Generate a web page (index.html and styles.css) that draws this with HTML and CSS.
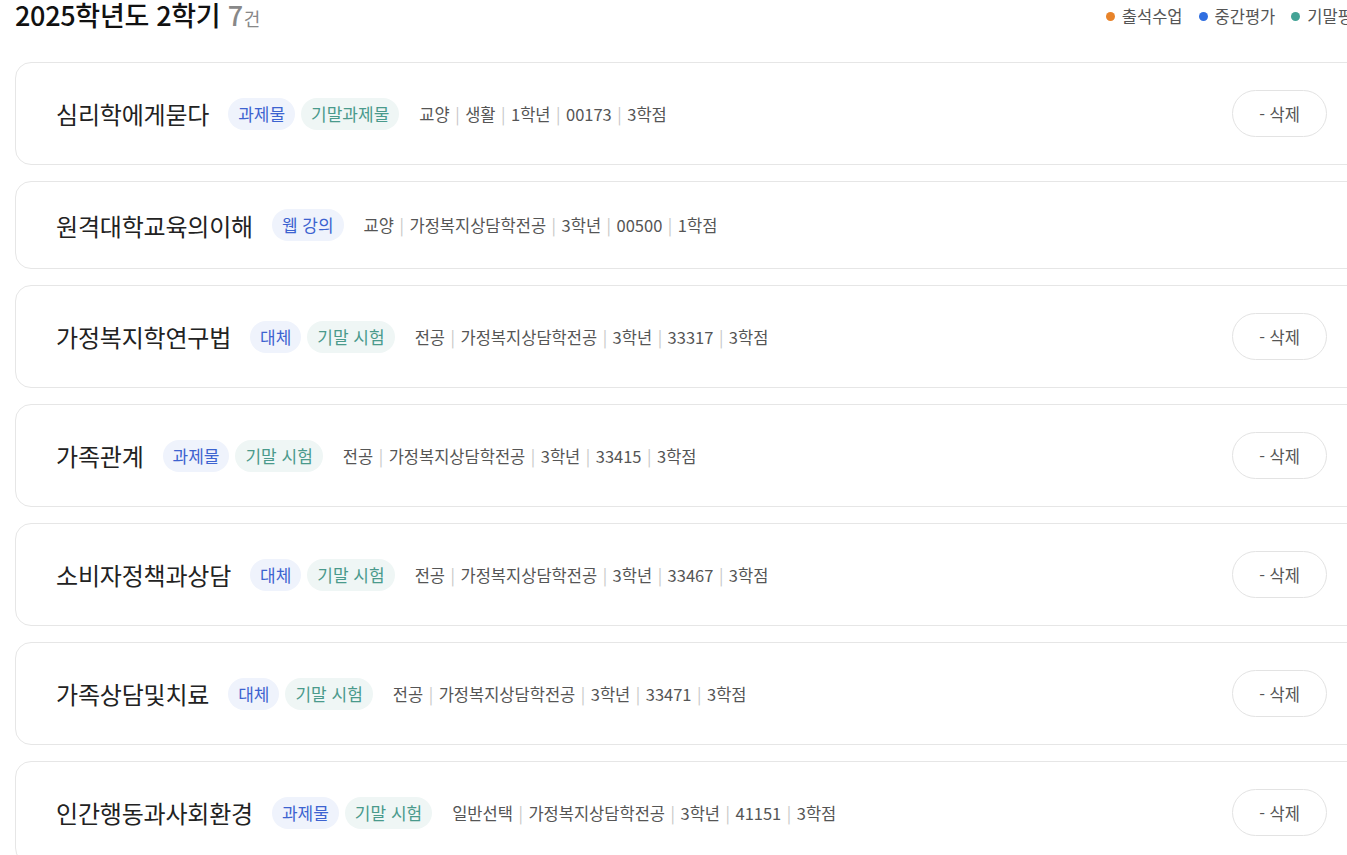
FILE: index.html
```html
<!DOCTYPE html>
<html lang="ko">
<head>
<meta charset="UTF-8" />
<title>수강 과목</title>
<link rel="stylesheet" href="styles.css">
</head>
<body>

<div class="page">
  <div class="header">
    <h2 class="term">2025학년도 2학기 <span class="count">7<small>건</small></span></h2>
    <div class="legend">
      <span class="legend-item"><i class="dot orange"></i>출석수업</span>
      <span class="legend-item"><i class="dot blue"></i>중간평가</span>
      <span class="legend-item"><i class="dot teal"></i>기말평가</span>
    </div>
  </div>

  <div class="list">
    <div class="card">
      <div class="info">
        <span class="name">심리학에게묻다</span>
        <span class="tag blue">과제물</span>
        <span class="tag teal">기말과제물</span>
        <span class="meta">교양<b>|</b>생활<b>|</b>1학년<b>|</b>00173<b>|</b>3학점</span>
      </div>
      <button class="del">- 삭제</button>
    </div>

    <div class="card">
      <div class="info">
        <span class="name">원격대학교육의이해</span>
        <span class="tag blue">웹 강의</span>
        <span class="meta">교양<b>|</b>가정복지상담학전공<b>|</b>3학년<b>|</b>00500<b>|</b>1학점</span>
      </div>
    </div>

    <div class="card">
      <div class="info">
        <span class="name">가정복지학연구법</span>
        <span class="tag blue">대체</span>
        <span class="tag teal">기말 시험</span>
        <span class="meta">전공<b>|</b>가정복지상담학전공<b>|</b>3학년<b>|</b>33317<b>|</b>3학점</span>
      </div>
      <button class="del">- 삭제</button>
    </div>

    <div class="card">
      <div class="info">
        <span class="name">가족관계</span>
        <span class="tag blue">과제물</span>
        <span class="tag teal">기말 시험</span>
        <span class="meta">전공<b>|</b>가정복지상담학전공<b>|</b>3학년<b>|</b>33415<b>|</b>3학점</span>
      </div>
      <button class="del">- 삭제</button>
    </div>

    <div class="card">
      <div class="info">
        <span class="name">소비자정책과상담</span>
        <span class="tag blue">대체</span>
        <span class="tag teal">기말 시험</span>
        <span class="meta">전공<b>|</b>가정복지상담학전공<b>|</b>3학년<b>|</b>33467<b>|</b>3학점</span>
      </div>
      <button class="del">- 삭제</button>
    </div>

    <div class="card">
      <div class="info">
        <span class="name">가족상담및치료</span>
        <span class="tag blue">대체</span>
        <span class="tag teal">기말 시험</span>
        <span class="meta">전공<b>|</b>가정복지상담학전공<b>|</b>3학년<b>|</b>33471<b>|</b>3학점</span>
      </div>
      <button class="del">- 삭제</button>
    </div>

    <div class="card">
      <div class="info">
        <span class="name">인간행동과사회환경</span>
        <span class="tag blue">과제물</span>
        <span class="tag teal">기말 시험</span>
        <span class="meta">일반선택<b>|</b>가정복지상담학전공<b>|</b>3학년<b>|</b>41151<b>|</b>3학점</span>
      </div>
      <button class="del">- 삭제</button>
    </div>
  </div>
</div>

</body>
</html>
```

FILE: styles.css
```css
html {
  overflow: hidden;
}
body {
  margin: 0;
  background: #fff;
  font-family: "Noto Sans CJK KR", "Noto Sans", sans-serif;
  color: #222;
}
.page {
  width: 1353px;
  margin-left: 15px;
}

/* 상단 제목 + 범례 */
.header {
  display: flex;
  justify-content: space-between;
  align-items: center;
  height: 32px;
  margin-bottom: 30px;
}
.term {
  margin: 0;
  font-size: 27px;
  line-height: 32px;
  font-weight: 500;
  color: #111;
  letter-spacing: -0.3px;
}
.count {
  color: #888;
}
.count small {
  font-size: 18px;
  font-weight: 400;
  margin-left: 1px;
}
.legend {
  display: flex;
  gap: 16px;
  font-size: 16.5px;
  line-height: 30px;
  color: #555;
}
.legend-item {
  display: flex;
  align-items: center;
  gap: 7px;
}
.dot {
  width: 9px;
  height: 9px;
  border-radius: 50%;
}
.dot.orange { background: #e8832a; }
.dot.blue { background: #2f6ee0; }
.dot.teal { background: #43a396; }

/* 과목 카드 */
.list {
  display: flex;
  flex-direction: column;
  gap: 16px;
}
.card {
  display: flex;
  justify-content: space-between;
  align-items: center;
  padding: 27px 40px;
  border: 1px solid #e6e6e6;
  border-radius: 16px;
}
.info {
  display: flex;
  align-items: center;
  height: 32px;
}
.name {
  font-size: 24px;
  color: #222;
  letter-spacing: -0.2px;
  margin-right: 19px;
}
.tag {
  height: 32px;
  line-height: 32px;
  padding: 0 10px;
  border-radius: 16px;
  font-size: 17px;
  margin-right: 6px;
}
.tag.blue {
  color: #3d63d0;
  background: #eff3fc;
}
.tag.teal {
  color: #4a9a8c;
  background: #eff6f5;
}
.meta {
  margin-left: 14px;
  font-size: 16.5px;
  color: #555;
}
.meta b {
  font-weight: 400;
  color: #c8c8c8;
  margin: 0 5.5px;
}
.del {
  width: 95px;
  height: 47px;
  border: 1px solid #e3e3e3;
  border-radius: 24px;
  background: #fff;
  font-family: inherit;
  font-size: 16.5px;
  color: #555;
  cursor: pointer;
}
```
